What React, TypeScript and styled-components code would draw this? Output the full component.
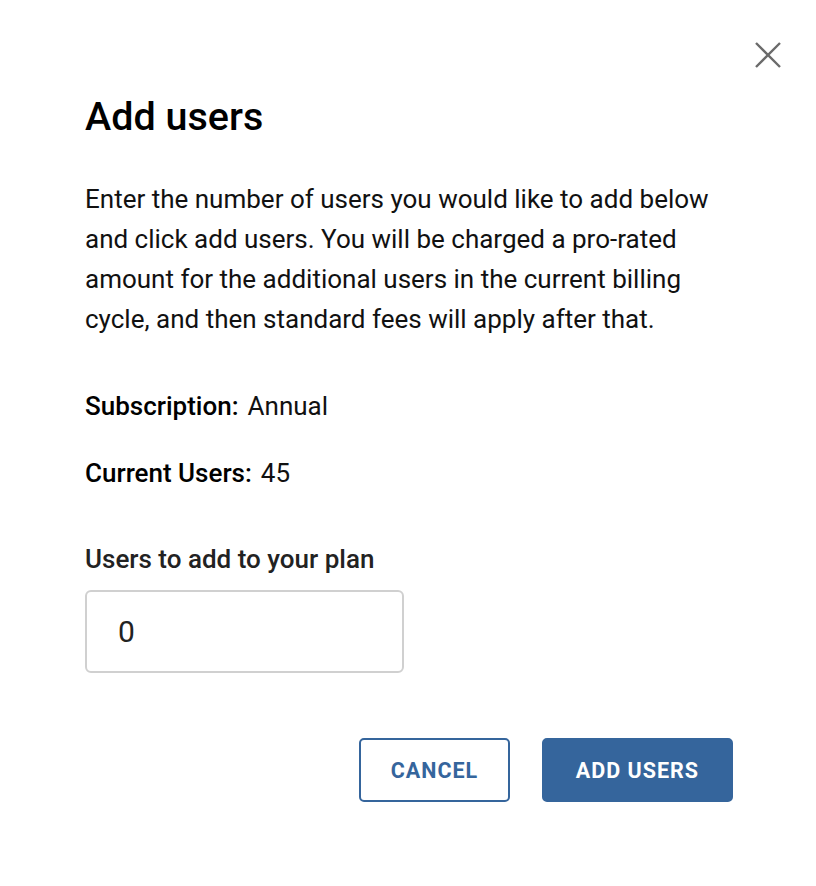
import styled, { createGlobalStyle } from "styled-components";

const GlobalStyle = createGlobalStyle`
  html, body {
    margin: 0;
    padding: 0;
    background: #ffffff;
  }
  body {
    font-family: Roboto, "Liberation Sans", sans-serif;
    color: #000;
  }
`;

const AddUsersModal = () => {
  const subscription = "Annual";
  const currentUsers = 45;

  return (
    <Dialog>
      <GlobalStyle />
      <CloseButton aria-label="Close">
        <svg width="30" height="30" viewBox="0 0 30 30">
          <path
            d="M3 3 L27 27 M27 3 L3 27"
            stroke="#6b6b6b"
            strokeWidth="2.4"
            fill="none"
          />
        </svg>
      </CloseButton>
      <Title>Add users</Title>
      <Description>
        Enter the number of users you would like to add below and click add
        users. You will be charged a pro-rated amount for the additional users
        in the current billing cycle, and then standard fees will apply after
        that.
      </Description>
      <Info>
        <InfoRow>
          <InfoLabel>Subscription:</InfoLabel>
          <span>{subscription}</span>
        </InfoRow>
        <InfoRow>
          <InfoLabel>Current Users:</InfoLabel>
          <span>{currentUsers}</span>
        </InfoRow>
      </Info>
      <Field>
        <FieldLabel htmlFor="users-to-add">Users to add to your plan</FieldLabel>
        <NumberInput id="users-to-add" defaultValue="0" />
      </Field>
      <Actions>
        <Button>CANCEL</Button>
        <Button primary>ADD USERS</Button>
      </Actions>
    </Dialog>
  );
};

const Dialog = styled.div`
  position: relative;
  width: 816px;
  height: 886px;
  box-sizing: border-box;
  padding: 95px 83px 0 85px;
  display: flex;
  flex-direction: column;
`;

const CloseButton = styled.button`
  position: absolute;
  top: 40px;
  right: 33px;
  width: 30px;
  height: 30px;
  padding: 0;
  border: none;
  background: none;
  cursor: pointer;
  display: flex;
`;

const Title = styled.h1`
  margin: 0;
  font-size: 39.5px;
  line-height: 44px;
  font-weight: 500;
  color: #000;
`;

const Description = styled.p`
  margin: 40px 0 0;
  font-size: 26px;
  line-height: 40px;
  color: #111;
  width: 640px;
`;

const Info = styled.div`
  margin-top: 47px;
  display: flex;
  flex-direction: column;
  gap: 27px;
`;

const InfoRow = styled.div`
  display: flex;
  gap: 9px;
  font-size: 26px;
  line-height: 40px;
  color: #111;
`;

const InfoLabel = styled.span`
  font-weight: 500;
  color: #000;
`;

const Field = styled.div`
  margin-top: 46px;
  display: flex;
  flex-direction: column;
  gap: 11px;
`;

const FieldLabel = styled.label`
  font-size: 26px;
  line-height: 40px;
  font-weight: 500;
  color: #222;
`;

const NumberInput = styled.input`
  width: 319px;
  height: 83px;
  box-sizing: border-box;
  border: 2px solid #d0d0d0;
  border-radius: 6px;
  padding: 0 31px;
  font-family: Roboto, "Liberation Sans", sans-serif;
  font-size: 30px;
  color: #222;
  outline: none;
`;

const Actions = styled.div`
  margin-top: 65px;
  display: flex;
  justify-content: flex-end;
  gap: 32px;
`;

const Button = styled.button<{ primary?: boolean }>`
  height: 64px;
  box-sizing: border-box;
  padding: 0 24px;
  min-width: ${(p) => (p.primary ? "191px" : "151px")};
  border-radius: 5px;
  border: 2px solid #35659c;
  background: ${(p) => (p.primary ? "#35659c" : "#fff")};
  color: ${(p) => (p.primary ? "#fff" : "#35659c")};
  font-family: Roboto, "Liberation Sans", sans-serif;
  font-size: 21.5px;
  font-weight: 700;
  letter-spacing: 1px;
  cursor: pointer;
`;

export default AddUsersModal;
